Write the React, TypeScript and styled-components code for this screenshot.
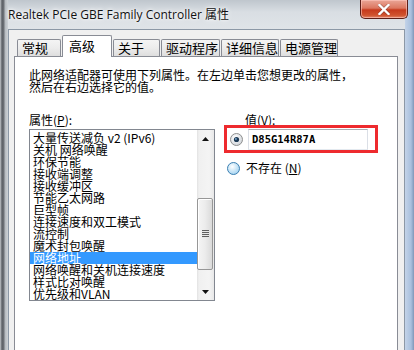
import React from "react";
import styled, { createGlobalStyle } from "styled-components";

const Global = createGlobalStyle`
  html, body { margin: 0; padding: 0; }
  body { width: 414px; height: 350px; overflow: hidden; background: #d4dae0; }
  #root { width: 414px; height: 350px; }
`;

const CJK = `"Noto Sans CJK SC", "Noto Sans", sans-serif`;

const Window = styled.div`
  width: 414px;
  height: 350px;
  display: flex;
  flex-direction: column;
  overflow: hidden;
  background:
    linear-gradient(90deg, #c4c8cc 0px, #5c6066 2px, #6e7278 4px, #b4b9be 5px, #cdd2d7 8px, transparent 8px),
    linear-gradient(270deg, #7f97b8 0px, #a9c0de 3px, #c3d3e8 9px, transparent 9px),
    linear-gradient(180deg, #bfc6cd 0px, #d9dee3 12px, #e0e4e8 30px, #dde2e6 100%);
`;

const TitleBar = styled.div`
  height: 29px;
  display: flex;
  justify-content: space-between;
  align-items: flex-start;
  flex-shrink: 0;
`;

const Title = styled.div`
  padding: 7px 0 0 8px;
  font-family: "Open Sans", "Noto Sans CJK SC", sans-serif;
  font-size: 12px;
  line-height: 16px;
  color: #111;
  text-shadow: 0 0 6px #fff, 0 0 3px #fff;
`;

const CloseButton = styled.div`
  width: 46px;
  height: 18px;
  margin-right: 6px;
  border: 1px solid #5c1e18;
  border-top: none;
  border-radius: 0 0 5px 5px;
  background: linear-gradient(180deg, #eaa697 0%, #dc7760 45%, #c63a1d 55%, #d0532f 85%, #e2886a 100%);
  box-shadow: inset 0 0 0 1px rgba(255, 200, 190, 0.6);
  display: flex;
  align-items: center;
  justify-content: center;
`;

const Client = styled.div`
  flex: 1;
  margin: 0 9px 0 8px;
  background: #f0f0f0;
  border: 1px solid #8c98a6;
  border-bottom: none;
  padding: 5px 6px 0 5px;
  display: flex;
  flex-direction: column;
  min-height: 0;
`;

const TabStrip = styled.div`
  height: 21px;
  display: flex;
  align-items: flex-end;
  padding-left: 3px;
  flex-shrink: 0;
  position: relative;
  z-index: 1;
`;

const Tab = styled.div<{ $w: number; $active?: boolean }>`
  width: ${(p) => p.$w}px;
  height: ${(p) => (p.$active ? 22 : 17)}px;
  margin-right: 1px;
  margin-bottom: ${(p) => (p.$active ? -1 : 0)}px;
  box-sizing: border-box;
  border: 1px solid #898c95;
  border-bottom: none;
  border-radius: 2px 2px 0 0;
  background: ${(p) =>
    p.$active ? "#ffffff" : "linear-gradient(180deg, #f4f4f4 0%, #ececec 50%, #dedede 100%)"};
  font-family: ${CJK};
  font-size: 13px;
  line-height: ${(p) => (p.$active ? 19 : 15)}px;
  color: #000;
  padding-left: ${(p) => (p.$active ? 6 : 4)}px;
  white-space: nowrap;
`;

const Panel = styled.div`
  flex: 1;
  background: #fff;
  border: 1px solid #898c95;
  border-bottom: none;
  padding: 12px 14px 0 14px;
  font-family: ${CJK};
  font-size: 12px;
  line-height: 12px;
  color: #000;
`;

const Description = styled.div`
  line-height: 12px;
  white-space: nowrap;
`;

const Columns = styled.div`
  margin-top: 21px;
  display: grid;
  grid-template-columns: 186px 160px;
  column-gap: 9px;
`;

const Column = styled.div`
  display: flex;
  flex-direction: column;
`;

const Label = styled.div<{ $indent?: number }>`
  height: 12px;
  line-height: 12px;
  padding-left: ${(p) => p.$indent ?? 0}px;
  white-space: nowrap;
  u { text-decoration: underline; text-underline-offset: 1px; }
`;

const ListBox = styled.div`
  margin-top: 3px;
  height: 172px;
  box-sizing: border-box;
  border: 1px solid #828790;
  display: flex;
`;

const Items = styled.div`
  flex: 1;
  padding-top: 2px;
  min-width: 0;
`;

const Item = styled.div<{ $selected?: boolean }>`
  height: 12px;
  line-height: 12px;
  padding-left: 3px;
  white-space: nowrap;
  background: ${(p) => (p.$selected ? "#3399ff" : "transparent")};
  color: ${(p) => (p.$selected ? "#fff" : "#000")};
`;

const ScrollBar = styled.div`
  width: 17px;
  display: flex;
  flex-direction: column;
  background: linear-gradient(90deg, #e2e2e2 0px, #f0f0f0 2px, #f4f4f4 12px, #e8e8e8 17px);
`;

const ArrowButton = styled.div`
  height: 17px;
  display: flex;
  align-items: center;
  justify-content: center;
  flex-shrink: 0;
`;

const Track = styled.div`
  flex: 1;
  display: flex;
  flex-direction: column;
  padding: 51px 1px 0 0;
`;

const Thumb = styled.div`
  height: 72px;
  box-sizing: border-box;
  border: 1px solid #979797;
  border-radius: 2px;
  background: linear-gradient(90deg, #f5f5f5 0%, #ececec 50%, #dadada 100%);
  box-shadow: inset 1px 1px 0 #fff;
  display: flex;
  align-items: center;
  justify-content: center;
`;

const Grip = styled.div`
  width: 7px;
  height: 8px;
  background: repeating-linear-gradient(180deg, #606060 0px, #606060 1px, #e8e8e8 1px, #e8e8e8 2px);
`;

const Highlight = styled.div`
  margin-top: -1px;
  height: 28px;
  box-sizing: border-box;
  width: 154px;
  border: 3px solid #ee2a2e;
  display: flex;
  align-items: center;
  padding-left: 3px;
  gap: 5px;
`;

const Field = styled.div`
  width: 120px;
  height: 21px;
  box-sizing: border-box;
  border: 1px solid #dbdfe6;
  border-top-color: #abadb3;
  border-bottom-color: #e3e9ef;
  display: flex;
  align-items: center;
  padding-left: 3px;
  font-family: "DejaVu Sans Mono", "Liberation Mono", monospace;
  font-size: 10.5px;
  font-weight: bold;
  color: #000;
`;

const RadioRow = styled.div`
  margin-top: 8px;
  height: 14px;
  display: flex;
  align-items: center;
  gap: 6px;
  padding-left: 3px;
  white-space: nowrap;
  u { text-decoration: underline; text-underline-offset: 1px; }
`;

const Radio = ({ checked, hover }: { checked?: boolean; hover?: boolean }) => (
  <svg width="13" height="13" viewBox="0 0 13 13">
    <defs>
      <radialGradient id={checked ? "rg1" : "rg2"} cx="0.4" cy="0.35" r="0.7">
        <stop offset="0" stopColor="#ffffff" />
        <stop offset="1" stopColor={hover ? "#9fd1f0" : "#cfd3d8"} />
      </radialGradient>
    </defs>
    <circle cx="6.5" cy="6.5" r="6" fill={`url(#${checked ? "rg1" : "rg2"})`} stroke={hover ? "#3c7fb1" : "#8e8f8f"} strokeWidth="1" />
    {checked && <circle cx="6.5" cy="6.5" r="2.6" fill="#1d3a55" />}
    {checked && <circle cx="5.9" cy="5.9" r="0.9" fill="#7fb0d8" />}
  </svg>
);

const items = [
  "大量传送减负 v2 (IPv6)",
  "关机 网络唤醒",
  "环保节能",
  "接收端调整",
  "接收缓冲区",
  "节能乙太网路",
  "巨型帧",
  "连接速度和双工模式",
  "流控制",
  "魔术封包唤醒",
  "网络地址",
  "网络唤醒和关机连接速度",
  "样式比对唤醒",
  "优先级和VLAN",
];

const tabs: { label: string; w: number; active?: boolean }[] = [
  { label: "常规", w: 44 },
  { label: "高级", w: 50, active: true },
  { label: "关于", w: 47 },
  { label: "驱动程序", w: 59 },
  { label: "详细信息", w: 58 },
  { label: "电源管理", w: 58 },
];

export default function App() {
  return (
    <>
      <Global />
      <Window>
        <TitleBar>
          <Title>Realtek PCIe GBE Family Controller 属性</Title>
          <CloseButton>
            <svg width="12" height="11" viewBox="0 0 12 11">
              <path d="M1.5 1 L10.5 10 M10.5 1 L1.5 10" stroke="#4a2020" strokeWidth="3.4" strokeLinecap="square" opacity="0.45" />
              <path d="M1.5 1 L10.5 10 M10.5 1 L1.5 10" stroke="#ffffff" strokeWidth="2.4" strokeLinecap="square" />
            </svg>
          </CloseButton>
        </TitleBar>
        <Client>
          <TabStrip>
            {tabs.map((t) => (
              <Tab key={t.label} $w={t.w} $active={t.active}>
                {t.label}
              </Tab>
            ))}
          </TabStrip>
          <Panel>
            <Description>
              此网络适配器可使用下列属性。在左边单击您想更改的属性，
              <br />
              然后在右边选择它的值。
            </Description>
            <Columns>
              <Column>
                <Label>
                  属性(<u>P</u>):
                </Label>
                <ListBox>
                  <Items>
                    {items.map((it) => (
                      <Item key={it} $selected={it === "网络地址"}>
                        {it}
                      </Item>
                    ))}
                  </Items>
                  <ScrollBar>
                    <ArrowButton>
                      <svg width="7" height="4" viewBox="0 0 7 4">
                        <path d="M3.5 0 L7 4 L0 4 Z" fill="#111" />
                      </svg>
                    </ArrowButton>
                    <Track>
                      <Thumb>
                        <Grip />
                      </Thumb>
                    </Track>
                    <ArrowButton>
                      <svg width="7" height="4" viewBox="0 0 7 4">
                        <path d="M0 0 L7 0 L3.5 4 Z" fill="#111" />
                      </svg>
                    </ArrowButton>
                  </ScrollBar>
                </ListBox>
              </Column>
              <Column>
                <Label $indent={21}>
                  值(<u>V</u>):
                </Label>
                <Highlight>
                  <Radio checked />
                  <Field>D85G14R87A</Field>
                </Highlight>
                <RadioRow>
                  <Radio hover />
                  <span>
                    不存在 (<u>N</u>)
                  </span>
                </RadioRow>
              </Column>
            </Columns>
          </Panel>
        </Client>
      </Window>
    </>
  );
}
